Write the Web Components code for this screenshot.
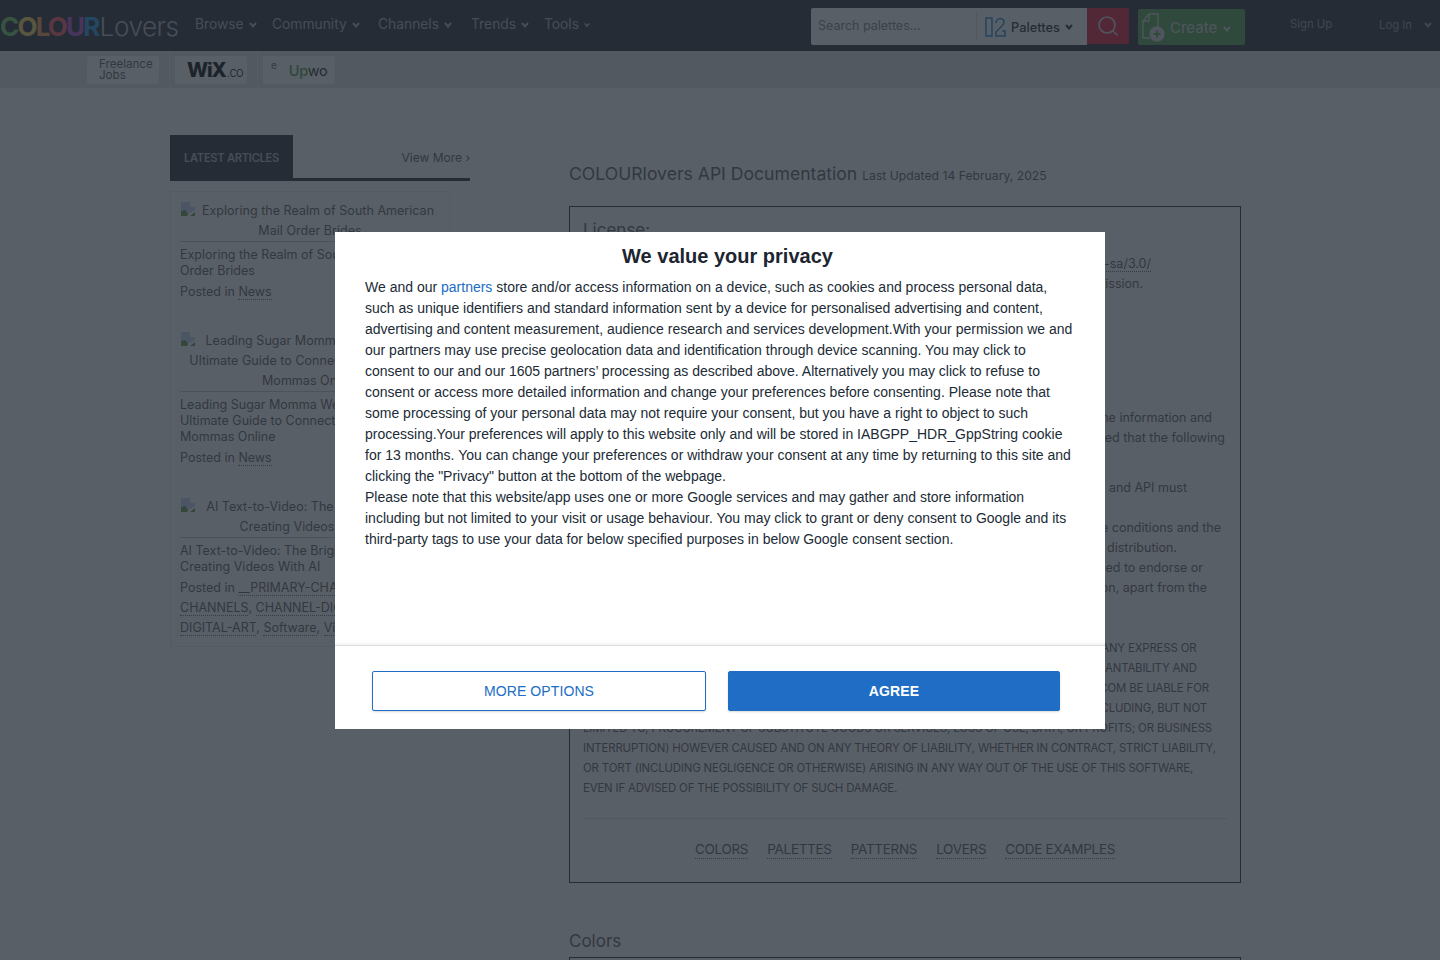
<!DOCTYPE html>
<html>
<head>
<meta charset="utf-8">
<title>COLOURlovers API Documentation</title>
<style>
  html, body { margin: 0; padding: 0; background: #fff; height: 960px; overflow: hidden; }
  body { font-family: Inter, "Liberation Sans", sans-serif; color: #666; }
</style>
</head>
<body>
<cl-header></cl-header>
<cl-subbar></cl-subbar>
<cl-page>
  <cl-sidebar slot="side">
    <cl-article title-text="Exploring the Realm of South American Mail Order Brides">
      Exploring the Realm of South American Mail<br>Order Brides
      <span slot="meta">Posted in <a>News</a></span>
    </cl-article>
    <cl-article title-text="Leading Sugar Momma Websites: The Ultimate Guide to Connecting with Sugar Mommas Online">
      Leading Sugar Momma Websites: The<br>Ultimate Guide to Connecting with Sugar<br>Mommas Online
      <span slot="meta">Posted in <a>News</a></span>
    </cl-article>
    <cl-article title-text="AI Text-to-Video: The Bright Future of Creating Videos With AI">
      AI Text-to-Video: The Bright Future of<br>Creating Videos With AI
      <span slot="meta">Posted in <a>__PRIMARY-CHANNELS</a>, <a>CHANNEL-</a><br><a>CHANNELS</a>, <a>CHANNEL-DIGITAL-ART</a>,<br><a>DIGITAL-ART</a>, <a>Software</a>, <a>Video</a></span>
    </cl-article>
  </cl-sidebar>
  <cl-docs slot="main"></cl-docs>
</cl-page>
<cl-consent></cl-consent>

<script>
const chev = (c) => `<svg width="8" height="6" viewBox="0 0 8 6" fill="none" stroke="${c}" stroke-width="2"><path d="M1 1l3 3.400L7 1"/></svg>`;

class ClHeader extends HTMLElement {
  connectedCallback() {
    const nav = [['Browse', 77], ['Community', 106], ['Channels', 93], ['Trends', 73], ['Tools', 46]];
    this.attachShadow({ mode: 'open' }).innerHTML = `
      <style>
        :host { display: flex; align-items: flex-start; height: 51px; background: #31353c; color: #b4b8bd; font-size: 13.800px; box-sizing: border-box; }
        .logo { width: 195px; font-size: 26px; letter-spacing: -1.800px; white-space: nowrap; line-height: 53px; font-weight: 700; }
        .logo i { font-style: normal; }
        .logo .l { font-size: 26.200px; font-weight: 300; color: #b4b8bd; letter-spacing: -.5px; margin-left: 1px; }
        nav { display: flex; width: 616px; line-height: 49px; }
        nav span { display: flex; align-items: center; gap: 5px; }
        .search { display: flex; width: 276px; height: 37px; margin-top: 8px; background: #fff; border-radius: 2px 0 0 2px; }
        .search .q { width: 166px; padding-left: 7px; color: #888; font-size: 12.500px; border-right: 1px solid #ddd; box-sizing: border-box; height: 30px; margin-top: 3px; line-height: 30px; }
        .search .p { display: flex; align-items: center; gap: 5px; padding: 1px 0 0 8px; color: #333; font-size: 12.800px; font-weight: 500; }
        .go { width: 42px; height: 36px; margin-top: 8px; background: #e2223f; border-radius: 0 2px 2px 0; display: flex; align-items: center; justify-content: center; }
        .create { display: flex; align-items: center; width: 107px; height: 36px; margin: 9px 0 0 9px; background: #5ba65a; border-radius: 2px; color: #d4d8d4; font-size: 15px; box-sizing: border-box; padding-left: 3px; gap: 5px; }
        .sign { margin-left: 45px; width: 89px; font-size: 11.300px; color: #9a9ea4; line-height: 49px; }
        .log { font-size: 11.300px; color: #9a9ea4; display: flex; align-items: center; gap: 12px; height: 49px; }
      </style>
      <div class="logo"><i style="color:#79d06c">C</i><i style="color:#ffdc60">O</i><i style="color:#ffa050">L</i><i style="color:#ff6068">O</i><i style="color:#c055d8">U</i><i style="color:#2fa0e8">R</i><i class="l">Lovers</i></div>
      <nav>${nav.map(n => `<span style="width:${n[1]}px"><b style="font-weight:400">${n[0]}</b>${chev('#b4b8bd')}</span>`).join('')}</nav>
      <div class="search">
        <div class="q">Search palettes...</div>
        <div class="p">
          <svg width="21" height="20" viewBox="0 0 21 20" fill="none" stroke="#2f8fd6" stroke-width="1.500"><rect x="1" y="1" width="6" height="18"/><path d="M11 6c.5-6 8-6 8-.5 0 2.500-4 5-8 9.500v4h9v-5h-3"/></svg>
          <span>Palettes</span>${chev('#333')}
        </div>
      </div>
      <div class="go"><svg width="22" height="22" viewBox="0 0 22 22" fill="none" stroke="#d8d8d8" stroke-width="1.600"><circle cx="10" cy="10" r="8"/><path d="M16 16l4.500 4.500"/></svg></div>
      <div class="create">
        <svg width="24" height="30" viewBox="0 0 24 30" fill="none" stroke="#d4d8d4" stroke-width="1.300"><path d="M8 2h9v13M8 2L2 9v17h7M8 2v7H2"/><circle cx="16" cy="22" r="7" fill="#d4d8d4"/><path d="M16 18.500v7M12.500 22h7" stroke="#5ba65a" stroke-width="1.800"/></svg>
        <span>Create</span><span style="margin-left:1px;margin-top:4px;display:flex">${chev('#d4d8d4')}</span>
      </div>
      <div class="sign">Sign Up</div>
      <div class="log"><span>Log In</span>${chev('#9a9ea4')}</div>`;
  }
}

class ClSubbar extends HTMLElement {
  connectedCallback() {
    this.attachShadow({ mode: 'open' }).innerHTML = `
      <style>
        :host { display: flex; height: 38px; background: #e1e5e4; padding-left: 87px; box-sizing: border-box; border-bottom: 1px solid #f4f5f5; }
        .c { width: 72px; height: 28px; margin-top: 5px; background: #fff; border-radius: 2px; box-sizing: border-box; }
        .sep { width: 1px; margin: 0 5px 0 10px; background: #f4f5f5; height: 37px; }
        .t { padding: 3px 0 0 12px; font-size: 11.600px; line-height: 11px; color: #666; }
        .w { display: flex; align-items: baseline; padding: 2px 0 0 12px; font-size: 20px; line-height: 24px; font-weight: 800; color: #111; letter-spacing: -1.200px; }
        .w small { font-size: 13px; font-weight: 300; letter-spacing: -.7px; margin-left: 1px; }
        .u { display: flex; align-items: flex-start; padding: 3px 0 0 8px; font-size: 10px; color: #666; }
        .u b { margin: 3px 0 0 12px; font-size: 14.500px; font-weight: 500; color: #4aa83f; letter-spacing: -.4px; }
        .u b span { color: #333; font-weight: 400; }
      </style>
      <div class="c t">Freelance<br>Jobs</div>
      <div class="sep"></div>
      <div class="c w">WiX<small>.co</small></div>
      <div class="sep"></div>
      <div class="c u"><span>e</span><b>Up<span>wo</span></b></div>`;
  }
}

class ClPage extends HTMLElement {
  connectedCallback() {
    this.attachShadow({ mode: 'open' }).innerHTML = `
      <style>
        :host { display: flex; padding-left: 170px; }
        .s { width: 300px; padding-top: 46px; margin-right: 99px; flex: none; }
        .m { width: 672px; flex: none; }
      </style>
      <div class="s"><slot name="side"></slot></div>
      <div class="m"><slot name="main"></slot></div>`;
  }
}

class ClSidebar extends HTMLElement {
  connectedCallback() {
    this.attachShadow({ mode: 'open' }).innerHTML = `
      <style>
        :host { display: block; }
        .tabs { display: flex; justify-content: space-between; align-items: flex-start; height: 46px; border-bottom: 3px solid #31353c; box-sizing: border-box; overflow: hidden; white-space: nowrap; }
        .tab { width: 123px; height: 46px; box-sizing: border-box; background: #31353c; color: #b4b8bd; font-size: 11.100px; font-weight: 600; line-height: 46px; text-align: center; letter-spacing: -.25px; }
        .more { font-size: 12px; color: #666; line-height: 46px; }
        .box { width: 280px; margin-top: 10px; border: 1px solid #eee; box-sizing: border-box; padding: 9px 9px 8px 9px; }
      </style>
      <div class="tabs"><div class="tab">LATEST ARTICLES</div><div class="more">View More ›</div></div>
      <div class="box"><slot></slot></div>`;
  }
}

class ClArticle extends HTMLElement {
  connectedCallback() {
    this.attachShadow({ mode: 'open' }).innerHTML = `
      <style>
        :host { display: block; font-size: 12.500px; color: #666; white-space: nowrap; margin-bottom: 29px; }
        :host(:last-child) { margin-bottom: 0; }
        .h { text-align: center; line-height: 20px; border-bottom: 1px solid #ccc; white-space: normal; letter-spacing: .03px; }
        svg { float: left; }
        .b { margin-top: 5px; line-height: 16px; }
        .p { margin-top: 3px; line-height: 20px; }
        ::slotted(span) { display: block; }
      </style>
      <div class="h"><svg width="16" height="16" viewBox="0 0 16 16"><path d="M0 0h11l5 5v11H0z" fill="#fff"/><path d="M1 1h9v5h5v3l-5 3-9-2z" fill="#c5d5f0"/><path d="M1 15v-5l4-1 3.500 4-1.500 2z" fill="#6a9e4f"/><path d="M10 15l5-4v4z" fill="#6a9e4f"/></svg>${this.getAttribute('title-text')}</div>
      <div class="b"><slot></slot></div>
      <div class="p"><slot name="meta"></slot></div>`;
    this.querySelectorAll('a').forEach(a => {
      a.style.borderBottom = '1px dotted #777';
    });
  }
}

class ClDocs extends HTMLElement {
  connectedCallback() {
    const caps = [
      'THIS SOFTWARE IS PROVIDED BY THE COPYRIGHT HOLDERS AND CONTRIBUTORS "AS IS" AND ANY EXPRESS OR',
      'IMPLIED WARRANTIES, INCLUDING, BUT NOT LIMITED TO, THE IMPLIED WARRANTIES OF MERCHANTABILITY AND',
      'FITNESS FOR A PARTICULAR PURPOSE ARE DISCLAIMED. IN NO EVENT SHALL COLOURLOVERS.COM BE LIABLE FOR',
      'ANY DIRECT, INDIRECT, INCIDENTAL, SPECIAL, EXEMPLARY, OR CONSEQUENTIAL DAMAGES (INCLUDING, BUT NOT',
      'LIMITED TO, PROCUREMENT OF SUBSTITUTE GOODS OR SERVICES; LOSS OF USE, DATA, OR PROFITS; OR BUSINESS',
      'INTERRUPTION) HOWEVER CAUSED AND ON ANY THEORY OF LIABILITY, WHETHER IN CONTRACT, STRICT LIABILITY,',
      'OR TORT (INCLUDING NEGLIGENCE OR OTHERWISE) ARISING IN ANY WAY OUT OF THE USE OF THIS SOFTWARE,',
      'EVEN IF ADVISED OF THE POSSIBILITY OF SUCH DAMAGE.'
    ];
    const end = (w, t) => `<div class="ln" style="width:${w}px">${t}</div>`;
    this.attachShadow({ mode: 'open' }).innerHTML = `
      <style>
        :host { display: block; color: #666; }
        .title { margin-top: 73px; height: 24px; line-height: 24px; white-space: nowrap; font-size: 17.600px; }
        .title small { font-size: 12.200px; }
        .box { margin-top: 20px; border: 1px solid #31353c; padding: 11px 13px 0; height: 677px; box-sizing: border-box; }
        h3 { margin: 0 0 12px; font-size: 17px; font-weight: 400; line-height: 24px; }
        .ln { font-size: 12.500px; line-height: 20px; white-space: nowrap; text-align: right; }
        .ln a { border-bottom: 1px dotted #777; }
        .g { margin-top: 20px; }
        .caps { margin-top: 40px; font-size: 11.400px; line-height: 20px; white-space: nowrap; letter-spacing: -.15px; height: 160px; }
        hr { margin: 20px 0 0; border: 0; border-top: 1px solid #ddd; }
        .links { display: flex; justify-content: center; gap: 19px; margin-top: 21px; font-size: 13.500px; letter-spacing: -.3px; line-height: 18px; }
        .links a { border-bottom: 1px dotted #777; }
        h2 { margin: 46px 0 0; font-size: 17px; font-weight: 400; line-height: 24px; }
        .next { margin-top: 4px; border-top: 1px solid #31353c; border-left: 1px solid #31353c; border-right: 1px solid #31353c; height: 40px; }
      </style>
      <div class="title">COLOURlovers API Documentation <small>Last Updated 14 February, 2025</small></div>
      <div class="box">
        <h3>License:</h3>
        ${end(568, 'COLOURlovers API terms: <a>http://creativecommons.org/licenses/by-nc-sa/3.0/</a>')}
        ${end(560, 'For commercial use of the API please obtain written permission.')}
        <div style="height:114px"></div>
        ${end(629, 'By using the COLOURlovers API you accept the information and')}
        ${end(642, 'conditions below. You are also expressly reminded that the following')}
        <div class="g" style="margin-top:30px"></div>
        ${end(604, 'Any redistribution of the COLOURlovers data and API must')}
        <div class="g"></div>
        ${end(638, 'Redistributions must reproduce these conditions and the')}
        ${end(594, 'disclaimer in the materials provided with the distribution.')}
        ${end(620, 'Neither name nor contributors may be used to endorse or')}
        ${end(624, 'promote products without specific written permission, apart from the')}
        <div class="caps">${caps.join('<br>')}</div>
        <hr>
        <div class="links"><a>COLORS</a><a>PALETTES</a><a>PATTERNS</a><a>LOVERS</a><a>CODE EXAMPLES</a></div>
      </div>
      <h2>Colors</h2>
      <div class="next"></div>`;
  }
}

class ClConsent extends HTMLElement {
  connectedCallback() {
    this.attachShadow({ mode: 'open' }).innerHTML = `
      <style>
        :host { position: fixed; inset: 0; display: flex; align-items: center; justify-content: center; background: rgba(33,41,52,.75); backdrop-filter: blur(.7px); font-family: "Liberation Sans", Arial, sans-serif; }
        .modal { width: 770px; height: 497px; background: #fff; color: #212b36; display: flex; flex-direction: column; }
        .top { flex: 1; padding: 0 30px; }
        h1 { margin: 13px 0 9px; padding-left: 15px; font-size: 20px; line-height: 23px; font-weight: 700; text-align: center; color: #1c2530; }
        p { margin: 0; font-size: 14px; line-height: 21px; white-space: nowrap; }
        a { color: #206dc5; }
        .foot { height: 84px; display: flex; gap: 22px; padding: 25px 45px 0 37px; box-sizing: border-box; border-top: 1px solid #ddd; box-shadow: 0 -1px 3px rgba(0,0,0,.08); }
        button { height: 40px; font: 14px/38px "Liberation Sans", Arial, sans-serif; letter-spacing: .1px; border: 1px solid #206dc5; border-radius: 2px; padding: 0; box-shadow: 0 1px 2px rgba(0,0,0,.15); }
        .more { width: 334px; background: #fff; color: #206dc5; }
        .ok { flex: 1; background: #206dc5; color: #fff; font-weight: 700; }
      </style>
      <div class="modal">
        <div class="top">
          <h1>We value your privacy</h1>
          <p>We and our <a>partners</a> store and/or access information on a device, such as cookies and process personal data,<br>
such as unique identifiers and standard information sent by a device for personalised advertising and content,<br>
advertising and content measurement, audience research and services development.With your permission we and<br>
our partners may use precise geolocation data and identification through device scanning. You may click to<br>
consent to our and our 1605 partners’ processing as described above. Alternatively you may click to refuse to<br>
consent or access more detailed information and change your preferences before consenting. Please note that<br>
some processing of your personal data may not require your consent, but you have a right to object to such<br>
processing.Your preferences will apply to this website only and will be stored in IABGPP_HDR_GppString cookie<br>
for 13 months. You can change your preferences or withdraw your consent at any time by returning to this site and<br>
clicking the "Privacy" button at the bottom of the webpage.</p>
          <p>Please note that this website/app uses one or more Google services and may gather and store information<br>
including but not limited to your visit or usage behaviour. You may click to grant or deny consent to Google and its<br>
third-party tags to use your data for below specified purposes in below Google consent section.</p>
        </div>
        <div class="foot"><button class="more">MORE OPTIONS</button><button class="ok">AGREE</button></div>
      </div>`;
  }
}

customElements.define('cl-header', ClHeader);
customElements.define('cl-subbar', ClSubbar);
customElements.define('cl-page', ClPage);
customElements.define('cl-sidebar', ClSidebar);
customElements.define('cl-article', ClArticle);
customElements.define('cl-docs', ClDocs);
customElements.define('cl-consent', ClConsent);
</script>
</body>
</html>
